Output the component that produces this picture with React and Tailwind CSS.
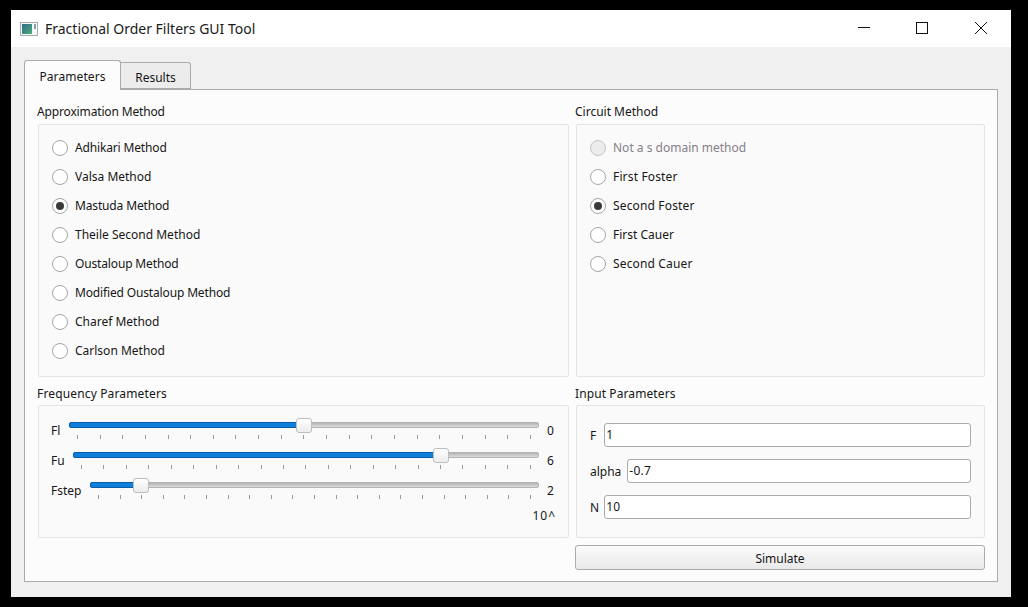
import React from "react";

const font = { fontFamily: '"Noto Sans", sans-serif' };

function Radio({ label, checked, disabled, tight, wide }) {
  return (
    <div className="flex items-center h-[29px] gap-[7px]">
      <span
        className={`w-[16px] h-[16px] rounded-full border flex items-center justify-center ${
          disabled ? "bg-[#ececec] border-[#c4c4c4]" : "bg-white border-[#a6a6a6]"
        }`}
      >
        {checked && <span className="w-[8px] h-[8px] rounded-full bg-[#3a3a3a]" />}
      </span>
      <span className={`${disabled ? "text-[#867f88]" : ""} ${tight ? "tracking-[-0.15px]" : ""} ${wide ? "tracking-[0.15px]" : ""}`}>{label}</span>
    </div>
  );
}

function Slider({ label, value, pos, width }) {
  return (
    <div className="flex items-start h-[30px]">
      <span className="mt-[4px] leading-[18px] mr-auto">{label}</span>
      <div className="relative h-[30px]" style={{ width }}>
        <div className="absolute left-0 right-0 top-[4px] h-[6px] rounded-[2px] bg-gradient-to-b from-[#b4b4b4] to-[#dcdcdc] border border-[#b4b4b4]" />
        <div
          className="absolute left-0 top-[4px] h-[6px] rounded-[2px] bg-[#0f7fdc] border border-[#0b5ea8]"
          style={{ width: pos }}
        />
        <div
          className="absolute top-0 w-[16px] h-[15px] rounded-[3px] bg-gradient-to-b from-white to-[#ececec] border border-[#bdbdbd]"
          style={{ left: pos - 8 }}
        />
        <div className="absolute left-[8px] right-[8px] top-[17px] h-[4px] flex justify-between">
          {Array.from({ length: 21 }).map((_, i) => (
            <span key={i} className="w-px h-[4px] bg-[#9b9b9b]" />
          ))}
        </div>
      </div>
      <span className="mt-[4px] leading-[18px] w-[22px] pl-[8px]">{value}</span>
    </div>
  );
}

function Field({ label, value, gap }) {
  return (
    <div className={`flex items-center h-[24px] ${gap}`}>
      <span className="pt-[2px]">{label}</span>
      <div className="flex-1 h-[24px] bg-white border border-[#ababab] rounded-[3px] pl-[1px] pr-[2px] flex items-center tracking-[0.2px]">
        {value}
      </div>
    </div>
  );
}

function Group({ title, className, titleClass, children }) {
  return (
    <div className={`flex flex-col ${className}`}>
      <div className={`h-[21px] leading-[18px] flex items-start -ml-[1px] ${titleClass}`}>{title}</div>
      <div className="flex-1 bg-[#fafafa] border border-[#e4e4e4] rounded-[2px]">{children}</div>
    </div>
  );
}

export default function App() {
  return (
    <div className="w-[1028px] h-[607px] bg-black pt-[10px] pl-[11px] overflow-hidden" style={font}>
      <div className="w-[1000px] h-[587px] bg-[#f0f0f0] flex flex-col text-[12px] text-[#161616]">
        <div className="h-[37px] bg-white flex items-center pl-[9px] shrink-0">
          <svg width="18" height="14" viewBox="0 0 18 14" className="mr-[7px]">
            <defs>
              <linearGradient id="g" x1="0" y1="0" x2="1" y2="1">
                <stop offset="0" stopColor="#2f6a8c" />
                <stop offset="1" stopColor="#4fae7c" />
              </linearGradient>
            </defs>
            <rect x="0.5" y="0.5" width="17" height="13" fill="#f7f7f7" stroke="#a4adb0" />
            <rect x="2" y="2" width="10" height="10" fill="url(#g)" />
            <rect x="14" y="2" width="2" height="5" fill="#8ba0aa" />
          </svg>
          <span className="text-[14px] text-[#1a1a1a]">Fractional Order Filters GUI Tool</span>
          <div className="ml-auto flex items-center h-full -mt-[1px]">
            <div className="w-[58px] flex justify-center">
              <svg width="14" height="14" viewBox="0 0 14 14"><path d="M1 6.5H13" stroke="#111" fill="none" /></svg>
            </div>
            <div className="w-[58px] flex justify-center">
              <svg width="14" height="14" viewBox="0 0 14 14"><rect x="1.5" y="1.5" width="11" height="11" stroke="#111" fill="none" /></svg>
            </div>
            <div className="w-[60px] flex justify-center">
              <svg width="14" height="14" viewBox="0 0 14 14"><path d="M1 1L13 13M13 1L1 13" stroke="#111" fill="none" /></svg>
            </div>
          </div>
        </div>

        <div className="px-[13px] pt-[13px] flex flex-col">
          <div className="flex items-end h-[30px] -mb-px relative">
            <div className="w-[97px] h-[30px] bg-[#fcfcfc] border border-[#ababab] border-b-0 rounded-t-[3px] flex items-center justify-center pt-[2px] tracking-[0.08px]">
              Parameters
            </div>
            <div className="w-[70px] h-[27px] bg-[#ececec] border border-[#ababab] border-l-0 rounded-tr-[3px] flex items-center justify-center mb-px pt-[4px]">
              Results
            </div>
          </div>
          <div className="h-[493px] bg-[#fcfcfc] border border-[#ababab] pl-[13px] pr-[12px] pt-[13px] grid grid-cols-[531px_409px] gap-x-[7px] grid-rows-[274px_161px_32px]">
            <Group title="Approximation Method" titleClass="tracking-[-0.15px]">
              <div className="pl-[13px] pt-[8px]">
                <Radio label="Adhikari Method" tight />
                <Radio label="Valsa Method" />
                <Radio label="Mastuda Method" checked tight />
                <Radio label="Theile Second Method" />
                <Radio label="Oustaloup Method" tight />
                <Radio label="Modified Oustaloup Method" tight />
                <Radio label="Charef Method" />
                <Radio label="Carlson Method" />
              </div>
            </Group>
            <Group title="Circuit Method">
              <div className="pl-[13px] pt-[8px]">
                <Radio label="Not a s domain method" disabled />
                <Radio label="First Foster" wide />
                <Radio label="Second Foster" checked wide />
                <Radio label="First Cauer" />
                <Radio label="Second Cauer" wide />
              </div>
            </Group>
            <Group title="Frequency Parameters" className="mt-[7px]" titleClass="tracking-[0.15px] pt-[1px]">
              <div className="pl-[12px] pr-[7px] pt-[12px] flex flex-col">
                <Slider label="Fl" value="0" pos={235} width={470} />
                <Slider label="Fu" value="6" pos={368} width={466} />
                <Slider label="Fstep" value="2" pos={51} width={449} />
                <div className="text-right leading-[18px] -mt-[1px] pr-[5px] tracking-[1px]">10^</div>
              </div>
            </Group>
            <Group title="Input Parameters" className="mt-[7px]" titleClass="tracking-[0.1px] pt-[1px]">
              <div className="px-[13px] pt-[17px] flex flex-col gap-[12px]">
                <Field label="F" value="1" gap="gap-[8px]" />
                <Field label="alpha" value="-0.7" gap="gap-[6px]" />
                <Field label="N" value="10" gap="gap-[5px]" />
              </div>
            </Group>
            <div />
            <div className="h-[25px] mt-[7px] pt-[2px] bg-gradient-to-b from-[#fbfbfb] to-[#e9e9e9] border border-[#ababab] rounded-[3px] flex items-center justify-center -ml-[1px] w-[410px]">
              Simulate
            </div>
          </div>
        </div>
      </div>
    </div>
  );
}
